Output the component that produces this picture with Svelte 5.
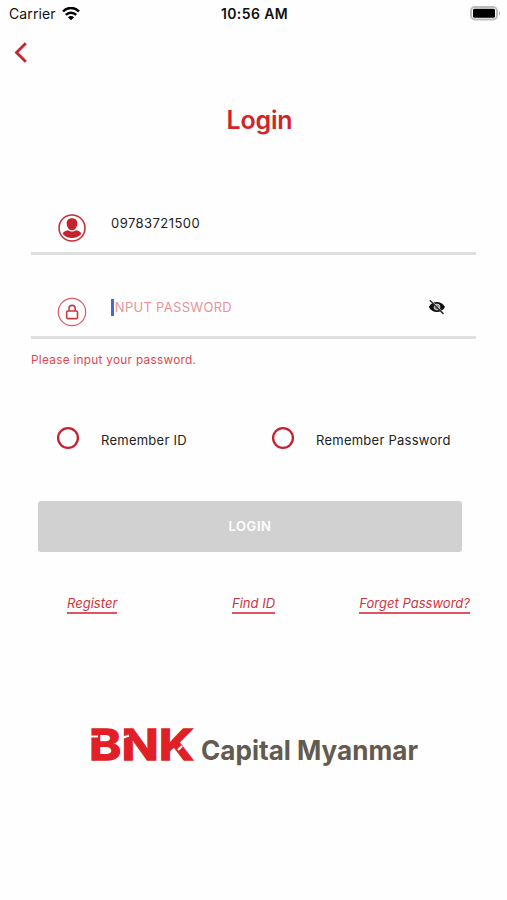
<script>
  let username = '09783721500';
  let password = '';

  let options = [
      { id: 'id', label: 'Remember ID', checked: false },
      { id: 'password', label: 'Remember Password', checked: false },
  ];

  let links = ['Register', 'Find ID', 'Forget Password?'];

  // The button stays disabled until both fields are filled
  $: disabled = !username || !password;

  function toggle(option) {
      option.checked = !option.checked;
      options = options;
  }
</script>

<style>
  :global(body) {
      background: #fff;
  }

  .screen {
      width: 507px;
      height: 900px;
      overflow: hidden;
      box-sizing: border-box;
      background: #fefefe;
      color: #222;
      font-family: Inter, "Liberation Sans", sans-serif;
      font-size: 13px;
  }

  svg {
      display: block;
      flex: none;
  }

  button {
      padding: 0;
      border: none;
      background: none;
      color: inherit;
      font: inherit;
      cursor: pointer;
  }

  .status {
      display: grid;
      grid-template-columns: 1fr auto 1fr;
      align-items: center;
      height: 27px;
      padding: 0 6px 0 9px;
      color: #111;
      font-size: 14px;
  }

  .carrier {
      display: flex;
      align-items: center;
      gap: 6px;
      letter-spacing: 0.1px;
  }

  .time {
      margin-right: 1px;
      font-size: 14px;
      font-weight: 600;
      letter-spacing: 0.4px;
  }

  .battery {
      justify-self: end;
  }

  .back {
      display: block;
      margin: 15px 0 0 14px;
  }

  h1 {
      margin: 41px 0 0 6px;
      color: #d2232a;
      font-size: 25px;
      font-weight: 600;
      line-height: 32px;
      letter-spacing: -0.2px;
      text-align: center;
      width: 507px;
  }

  .form {
      width: 445px;
      margin: 65px 0 0 31px;
  }

  .field {
      display: flex;
      box-sizing: border-box;
      height: 54px;
      padding-left: 26px;
      border-bottom: 3px solid #dfdfdf;
  }

  .field + .field {
      margin-top: 30px;
  }

  .field svg {
      margin-top: 11.5px;
  }

  .value {
      position: relative;
      width: 305px;
      margin: 12px 0 0 24px;
  }

  input {
      display: block;
      width: 100%;
      height: 20px;
      padding: 0;
      border: none;
      outline: none;
      background: none;
      color: #222;
      font: inherit;
      letter-spacing: 0.45px;
  }

  input::placeholder {
      color: #e8939b;
      opacity: 1;
      letter-spacing: 0.3px;
  }

  .caret {
      position: absolute;
      top: 2px;
      left: 0;
      width: 3px;
      height: 17px;
      background: #4169d8;
  }

  .field .eye {
      align-self: flex-start;
      margin: 3px 0 0 12px;
  }

  .field .eye svg {
      margin-top: 11px;
  }

  .error {
      margin: 12px 0 0;
      color: #dc4850;
      font-size: 11.8px;
      line-height: 18px;
      letter-spacing: 0.28px;
  }

  .options {
      display: grid;
      grid-template-columns: 215px 1fr;
      margin: 57px 0 0 25px;
  }

  .option {
      display: flex;
      align-items: center;
      gap: 21px;
      letter-spacing: 0.25px;
  }

  .option span {
      padding-top: 4px;
  }

  .login {
      display: block;
      width: 424px;
      height: 51px;
      margin: 51px 0 0 38px;
      padding-bottom: 2px;
      border-radius: 3px;
      background: #c8242c;
      color: #fff;
      font-weight: 600;
      letter-spacing: 0.6px;
  }

  .login:disabled {
      background: #d1d1d1;
  }

  .links {
      display: grid;
      grid-template-columns: 165px 1fr auto;
      justify-items: start;
      margin: 43px 37px 0 67px;
  }

  .links button {
      border-bottom: 2px solid #dc5560;
      color: #cb3640;
      font-style: italic;
      font-size: 13px;
      line-height: 17px;
      letter-spacing: 0.02px;
  }

  .brand {
      margin: 105px 0 0 80px;
  }
</style>

<div class="screen">
  <div class="status">
      <div class="carrier">
          <span>Carrier</span>
          <svg width="18" height="14" viewBox="0 0 18 14">
              <path d="M1 4.500C5.500-.2 12.500-.2 17 4.500M3.800 7.800c2.900-2.900 7.500-2.900 10.400 0" fill="none" stroke="#000" stroke-width="2.500" />
              <path d="M9 13.300L5.900 10.200c1.800-1.700 4.400-1.700 6.200 0z" />
          </svg>
      </div>
      <span class="time">10:56 AM</span>
      <svg class="battery" width="31" height="15" viewBox="0 0 31 15">
          <rect x="1" y="1" width="26" height="12.500" rx="4" fill="#fff" stroke="#bbb" stroke-width="2" />
          <rect x="3" y="2.700" width="22" height="9" rx="1.500" />
          <path d="M29 5.500q2 2 0 4z" fill="#999" />
      </svg>
  </div>

  <button class="back" aria-label="Back">
      <svg width="14" height="21" viewBox="0 0 14 21">
          <path d="M11.800 1.200L2.500 10.500l9.300 9.300" fill="none" stroke="#c4242c" stroke-width="2.800" />
      </svg>
  </button>

  <h1>Login</h1>

  <div class="form">
      <div class="field">
          <svg width="30" height="30" viewBox="0 0 30 30">
              <circle cx="15" cy="15" r="13" fill="#fff" stroke="#c5313a" stroke-width="1.600" />
              <path d="M15 5.200c3.500 0 5.500 2.100 5.300 5.200-.2 3.800-2.200 6.800-5.300 6.800s-5.100-3-5.300-6.800c-.2-3.100 1.800-5.200 5.300-5.200z" fill="#c4232b" />
              <path d="M5.700 21c.5-2.300 2.500-3.300 5.300-3.800 2.200 1.800 5.800 1.800 8 0 2.800.5 4.800 1.500 5.300 3.800-4.300 5.300-14.300 5.300-18.600 0z" fill="#c4232b" />
          </svg>
          <div class="value">
              <input bind:value={username} aria-label="ID">
          </div>
      </div>
      <div class="field">
          <svg width="30" height="30" viewBox="0 0 30 30">
              <circle cx="15" cy="15" r="13.700" fill="#fff" stroke="#d65b66" stroke-width="1.200" />
              <rect x="9.700" y="14" width="10.800" height="7.600" rx="1" fill="none" stroke="#c83b43" stroke-width="1.600" />
              <path d="M12 14v-2.500c0-4.200 6.200-4.200 6.200 0V14" fill="none" stroke="#c83b43" stroke-width="1.600" />
          </svg>
          <div class="value">
              <input type="password" bind:value={password} placeholder="INPUT PASSWORD">
              <span class="caret"></span>
          </div>
          <button class="eye" aria-label="Show password">
              <svg width="18" height="16" viewBox="0 0 18 16">
                  <path d="M.8 8C4.200 1.300 13.500 1.300 17 8c-3.500 6.700-12.800 6.700-16.200 0z" fill="#111" />
                  <circle cx="9" cy="8" r="2.900" fill="#888" stroke="#ddd" stroke-width=".9" />
                  <path d="M2.800 .7l13.200 13.200" stroke="#fff" stroke-width=".7" />
                  <path d="M1.800 1.200l13.700 13.700" stroke="#333" stroke-width="1.500" />
              </svg>
          </button>
      </div>
      <p class="error">Please input your password.</p>

      <div class="options">
          {#each options as option (option.id)}
              <button class="option" role="checkbox" aria-checked={option.checked} on:click={() => toggle(option)}>
                  <svg width="24" height="24" viewBox="0 0 24 24">
                      <circle cx="12" cy="12" r="9.900" fill="none" stroke="#c2242e" stroke-width="2.300" />
                      {#if option.checked}
                          <circle cx="12" cy="12" r="5" fill="#c2242e" />
                      {/if}
                  </svg>
                  <span>{option.label}</span>
              </button>
          {/each}
      </div>
  </div>

  <button class="login" {disabled}>LOGIN</button>

  <div class="links">
      {#each links as link}
          <button>{link}</button>
      {/each}
  </div>

  <svg class="brand" width="350" height="60" viewBox="0 0 350 60" font-family="Inter, sans-serif">
      <text x="9" y="41" font-size="43" font-weight="700" fill="#e01f26" stroke="#e01f26" stroke-width="1.300" textLength="105" lengthAdjust="spacingAndGlyphs">BNK</text>
      <path d="M9 17.500h9M42 19l7-2.500M98 31l4-4" stroke="#fefefe" stroke-width="2" />
      <text x="121" y="41" font-size="27" font-weight="700" fill="#645a4d" textLength="217" lengthAdjust="spacingAndGlyphs">Capital Myanmar</text>
  </svg>
</div>
